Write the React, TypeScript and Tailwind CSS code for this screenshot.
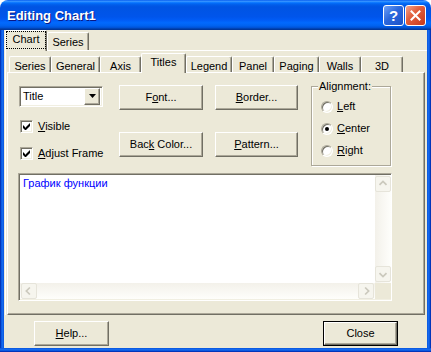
import React from "react";

const raised =
  "border border-white border-r-[#716F64] border-b-[#716F64] shadow-[inset_-1px_-1px_0_#ACA899] bg-[#ECE9D8]";
const sunken =
  "border border-white border-t-[#ACA899] border-l-[#ACA899] shadow-[inset_1px_1px_0_#716F64,inset_-1px_-1px_0_#F1EFE2]";

const Btn: React.FC<{ className?: string; children: React.ReactNode }> = ({ className = "", children }) => (
  <div className={`flex h-[25px] items-center justify-center leading-[13px] text-black ${raised} ${className}`}>
    <span className="whitespace-nowrap">{children}</span>
  </div>
);

const Check: React.FC<{ children: React.ReactNode; className?: string }> = ({ children, className = "" }) => (
  <div className={`flex h-[13px] items-center gap-[5px] ${className}`}>
    <div className={`ml-[1px] flex h-[13px] w-[13px] shrink-0 items-center justify-center bg-white ${sunken}`}>
      <svg width="7" height="7" viewBox="0 0 7 7">
        <path d="M0 2.5h1v1h1v1h1v-1h1v-1h1v-1h1v-1h1v3h-1v1h-1v1h-1v1h-1v1h-1v-1h-1v-1h-1z" fill="#000" />
      </svg>
    </div>
    <span className="whitespace-nowrap leading-[13px]">{children}</span>
  </div>
);

const Radio: React.FC<{ on?: boolean; children: React.ReactNode }> = ({ on, children }) => (
  <div className="flex h-[12px] items-center gap-[4px]">
    <div className="flex h-[12px] w-[12px] items-center justify-center rounded-full border border-white border-t-[#ACA899] border-l-[#ACA899] bg-white shadow-[inset_1px_1px_0_#716F64,inset_-1px_-1px_0_#F1EFE2]">
      {on && <div className="h-[4px] w-[4px] rounded-full bg-black" />}
    </div>
    <span className="leading-[13px]">{children}</span>
  </div>
);

const ScrollBtn: React.FC<{ dir: "up" | "down" | "left" | "right" }> = ({ dir }) => {
  const paths = {
    up: "M4 9l4-4 4 4",
    down: "M4 7l4 4 4-4",
    left: "M9 4l-4 4 4 4",
    right: "M7 4l4 4-4 4",
  };
  return (
    <div className="flex h-[16px] w-[16px] items-center justify-center rounded-[2px] border border-[#E6E4DA] bg-[#F6F5EE]">
      <svg width="16" height="16" viewBox="0 0 16 16">
        <path d={paths[dir]} stroke="#CBC9BD" strokeWidth="2" fill="none" />
      </svg>
    </div>
  );
};

const innerTabs = [
  { label: "Series", w: "w-[42px]" },
  { label: "General", w: "w-[49px]" },
  { label: "Axis", w: "w-[41px]" },
  { label: "Titles", w: "w-[45px]", sel: true },
  { label: "Legend", w: "w-[46px]" },
  { label: "Panel", w: "w-[42px]" },
  { label: "Paging", w: "w-[45px]" },
  { label: "Walls", w: "w-[42px]" },
  { label: "3D", w: "w-[42px]" },
];

const tabEdge =
  "rounded-t-[2px] border-t border-l border-r border-white border-r-[#716F64] shadow-[inset_-1px_0_0_#ACA899] bg-[#ECE9D8]";

export default function App() {
  return (
    <div className="h-[352px] w-[431px] overflow-hidden bg-white font-['Liberation_Sans',Arial,sans-serif] text-[11px] text-black">
      {/* title bar */}
      <div className="flex h-[30px] items-center rounded-t-[8px] bg-[linear-gradient(to_bottom,#0058EE_0%,#3A93FF_4%,#288EFF_6%,#127DFF_8%,#036FFC_10%,#0262EE_14%,#0057E5_20%,#0054E3_24%,#0055EB_56%,#005BF5_66%,#026AFE_76%,#0062EF_86%,#0052D6_92%,#0040AB_96%,#003092_100%)] pl-[7px] pr-[5px]">
        <span className="mt-[1px] text-[13px] font-bold text-white [text-shadow:1px_1px_0_#0a1883]">
          Editing Chart1
        </span>
        <div className="ml-auto flex gap-[1px]">
          <div className="flex h-[21px] w-[21px] items-center justify-center rounded-[3px] border border-white bg-[linear-gradient(135deg,#6EA0F7,#2C68DC_45%,#1B51C8)]">
            <span className="text-[15px] font-bold leading-none text-white">?</span>
          </div>
          <div className="flex h-[21px] w-[21px] items-center justify-center rounded-[3px] border border-white bg-[linear-gradient(135deg,#F2A48D,#E2603E_40%,#C7381B)]">
            <svg width="11" height="11" viewBox="0 0 11 11">
              <path d="M1.5 1.5l8 8M9.5 1.5l-8 8" stroke="#fff" strokeWidth="2" strokeLinecap="square" />
            </svg>
          </div>
        </div>
      </div>

      <div className="flex h-[318px]">
        <div className="w-[4px] bg-[linear-gradient(to_right,#001EA0,#0855DD_30%,#166AEE_60%,#0855DD)]" />

        {/* client */}
        <div className="flex w-[423px] flex-col bg-[#ECE9D8]">
          {/* outer tabs */}
          <div className="flex h-[20px] items-end pl-[1px]">
            <div className={`relative z-10 -mb-px flex h-[21px] w-[42px] ${tabEdge}`}>
              <div className="flex h-[18px] w-[40px] justify-center border border-dotted border-black leading-[13px]">
                <span className="pt-[1px]">Chart</span>
              </div>
            </div>
            <div className={`flex h-[18px] w-[42px] justify-center pt-[3px] leading-[13px] ${tabEdge}`}>Series</div>
          </div>

          {/* outer panel */}
          <div className="ml-[1px] flex h-[265px] flex-col border-t border-l border-white pl-[1px]">
            {/* inner tabs */}
            <div className="flex h-[21px] items-end pl-[2px]">
              {innerTabs.map((t) =>
                t.sel ? (
                  <div
                    key={t.label}
                    className={`relative z-10 -mb-px flex h-[20px] justify-center pt-[2px] leading-[13px] ${t.w} ${tabEdge}`}
                  >
                    {t.label}
                  </div>
                ) : (
                  <div key={t.label} className={`flex h-[16px] justify-center pt-[3px] leading-[13px] ${t.w} ${tabEdge}`}>
                    {t.label}
                  </div>
                )
              )}
            </div>

            {/* inner panel */}
            <div className="flex h-[244px] w-[418px] flex-col border border-white border-r-[#716F64] border-b-[#716F64] shadow-[inset_-1px_-1px_0_#ACA899]">
              <div className="mt-[12px] flex items-start pl-[11px]">
                <div className="flex w-[84px] flex-col">
                  <div className={`mt-[1px] flex h-[21px] w-[84px] items-center bg-white ${sunken}`}>
                    <span className="flex-1 pl-[3px] leading-[13px]">Title</span>
                    <div className={`mr-[2px] flex h-[17px] w-[16px] items-center justify-center ${raised}`}>
                      <svg width="7" height="4" viewBox="0 0 7 4">
                        <path d="M0 0h7L3.5 4z" fill="#000" />
                      </svg>
                    </div>
                  </div>
                  <Check className="mt-[13px]">
                    <u>V</u>isible
                  </Check>
                  <Check className="mt-[14px]">
                    <u>A</u>djust Frame
                  </Check>
                </div>

                <div className="ml-[16px] flex flex-col gap-[22px]">
                  <Btn className="w-[84px]">
                    F<u>o</u>nt...
                  </Btn>
                  <Btn className="w-[84px]">
                    Bac<u>k</u> Color...
                  </Btn>
                </div>

                <div className="ml-[12px] flex flex-col gap-[22px]">
                  <Btn className="w-[83px]">
                    <u>B</u>order...
                  </Btn>
                  <Btn className="w-[83px]">
                    <u>P</u>attern...
                  </Btn>
                </div>

                <div className="relative ml-[13px] mt-[1px] h-[80px] w-[80px] border border-[#ACA899] shadow-[inset_1px_1px_0_#fff,1px_1px_0_#fff]">
                  <span className="absolute -top-[7px] left-[6px] bg-[#ECE9D8] px-[1px] leading-[13px]">Alignment:</span>
                  <div className="flex flex-col gap-[10px] pl-[9px] pt-[14px]">
                    <Radio>
                      <u>L</u>eft
                    </Radio>
                    <Radio on>
                      <u>C</u>enter
                    </Radio>
                    <Radio>
                      <u>R</u>ight
                    </Radio>
                  </div>
                </div>
              </div>

              {/* memo */}
              <div className={`ml-[10px] mt-[7px] flex h-[128px] w-[374px] flex-col ${sunken}`}>
                <div className="ml-[1px] mt-[1px] flex h-[108px]">
                  <div className="flex-1 bg-white pl-[3px] pt-[2px] leading-[13px] text-[#0000FF]">График функции</div>
                  <div className="flex w-[16px] flex-col justify-between bg-[linear-gradient(to_right,#F3F1EA,#FEFEFB)] py-[1px]">
                    <ScrollBtn dir="up" />
                    <ScrollBtn dir="down" />
                  </div>
                </div>
                <div className="ml-[1px] flex h-[16px]">
                  <div className="flex flex-1 justify-between bg-[linear-gradient(to_bottom,#F3F1EA,#FEFEFB)] px-[1px]">
                    <ScrollBtn dir="left" />
                    <ScrollBtn dir="right" />
                  </div>
                  <div className="w-[16px] bg-[#ECE9D8]" />
                </div>
              </div>
            </div>
          </div>

          {/* footer */}
          <div className="flex h-[33px] items-start pl-[30px] pr-[29px] pt-[6px]">
            <Btn className="w-[75px]">
              <u>H</u>elp...
            </Btn>
            <div className="ml-auto h-[25px] w-[75px] border border-black">
              <Btn className="h-full w-full">Close</Btn>
            </div>
          </div>
        </div>

        <div className="w-[4px] bg-[linear-gradient(to_right,#0855DD,#166AEE_40%,#0855DD_70%,#001EA0)]" />
      </div>
      <div className="h-[4px] bg-[linear-gradient(to_bottom,#0855DD,#166AEE_40%,#0855DD_70%,#001EA0)]" />
    </div>
  );
}
